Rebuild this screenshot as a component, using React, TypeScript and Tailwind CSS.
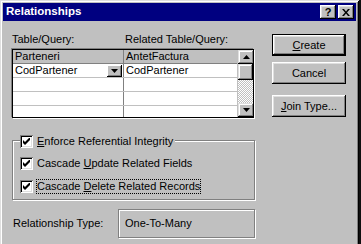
const font = { fontFamily: '"Liberation Sans", Arial, sans-serif' };

function TitleButton({ children }: { children: React.ReactNode }) {
  return (
    <div className="flex h-[14px] w-[16px] items-center justify-center bg-[#c0c0c0] text-[11px] font-bold leading-none text-black shadow-[inset_-1px_-1px_#000,inset_1px_1px_#fff,inset_-2px_-2px_#808080,inset_2px_2px_#dfdfdf]">
      {children}
    </div>
  );
}

function Check() {
  return (
    <div className="flex h-[13px] w-[13px] shrink-0 items-center justify-center bg-white shadow-[inset_1px_1px_#808080,inset_-1px_-1px_#fff,inset_2px_2px_#000,inset_-2px_-2px_#dfdfdf]">
      <svg width="7" height="7" viewBox="0 0 7 7">
        <path d="M0 2 L2 4 L6 0 L7 0 L7 2 L2 7 L0 5 Z" fill="#000" />
      </svg>
    </div>
  );
}

function Button({ children, isDefault }: { children: React.ReactNode; isDefault?: boolean }) {
  return (
    <div
      className={
        isDefault
          ? "flex h-[22px] w-[74px] items-center justify-center border border-black bg-[#c0c0c0] text-[11px] shadow-[inset_-1px_-1px_#000,inset_1px_1px_#fff,inset_-2px_-2px_#808080,inset_2px_2px_#dfdfdf]"
          : "flex h-[22px] w-[74px] items-center justify-center bg-[#c0c0c0] text-[11px] shadow-[inset_-1px_-1px_#000,inset_1px_1px_#fff,inset_-2px_-2px_#808080,inset_2px_2px_#dfdfdf]"
      }
    >
      {children}
    </div>
  );
}

function Arrow({ up }: { up?: boolean }) {
  return (
    <div className="flex h-[14px] w-[16px] items-center justify-center bg-[#c0c0c0] shadow-[inset_-1px_-1px_#000,inset_1px_1px_#dfdfdf,inset_-2px_-2px_#808080,inset_2px_2px_#fff]">
      <svg width="7" height="4" viewBox="0 0 7 4">
        <path d={up ? "M3.5 0 L7 4 L0 4 Z" : "M0 0 L7 0 L3.5 4 Z"} fill="#000" />
      </svg>
    </div>
  );
}

const rows = [
  ["CodPartener", "CodPartener"],
  ["", ""],
  ["", ""],
  ["", ""],
];

export default function App() {
  return (
    <div style={font} className="flex h-[244px] w-[361px] overflow-hidden bg-[#101010] text-[11px] text-black">
      <div className="flex h-[250px] w-[359px] flex-col bg-[#c0c0c0] pt-[3px] shadow-[inset_1px_1px_#dfdfdf,inset_-1px_-1px_#000,inset_2px_2px_#fff,inset_-2px_-2px_#808080]">
        {/* title bar */}
        <div className="mx-[3px] flex h-[18px] items-center bg-[#000080] pl-[3px] pr-[2px]">
          <span className="text-[11.5px] font-bold text-white">Relationships</span>
          <div className="ml-auto flex gap-[2px]">
            <TitleButton>?</TitleButton>
            <TitleButton>
              <svg width="8" height="7" viewBox="0 0 8 7">
                <path d="M0 0 L2 0 L4 2.5 L6 0 L8 0 L5 3.5 L8 7 L6 7 L4 4.5 L2 7 L0 7 L3 3.5 Z" fill="#000" />
              </svg>
            </TitleButton>
          </div>
        </div>

        <div className="flex pl-[12px]">
          {/* left column */}
          <div className="flex w-[244px] flex-col pt-[12px]">
            <div className="flex h-[13px] leading-[13px]">
              <span className="w-[113px]">Table/Query:</span>
              <span>Related Table/Query:</span>
            </div>

            {/* grid */}
            <div className="mt-[3px] flex h-[69px] w-[242px] border border-black bg-white shadow-[-1px_-1px_0_#808080,1px_1px_0_#fff]">
              <div className="flex flex-1 flex-col overflow-hidden">
                <div className="flex h-[14px] shrink-0 border-b border-[#808080] bg-[#c0c0c0] leading-[13px]">
                  <div className="w-[111px] border-r border-[#808080] pl-[2px]">Parteneri</div>
                  <div className="flex-1 pl-[2px]">AntetFactura</div>
                </div>
                {rows.map((r, i) => (
                  <div key={i} className="flex h-[14px] shrink-0 border-b border-[#c0c0c0] leading-[13px]">
                    <div className="flex w-[111px] items-center border-r border-[#808080] pl-[2px]">
                      <span className="flex-1">{r[0]}</span>
                      {i === 0 && (
                        <div className="mr-[1px] flex h-[12px] w-[15px] items-center justify-center bg-[#c0c0c0] shadow-[inset_-1px_-1px_#000,inset_1px_1px_#fff,inset_-2px_-2px_#808080]">
                          <svg width="7" height="4" viewBox="0 0 7 4">
                            <path d="M0 0 L7 0 L3.5 4 Z" fill="#000" />
                          </svg>
                        </div>
                      )}
                    </div>
                    <div className="flex-1 pl-[2px]">{r[1]}</div>
                  </div>
                ))}
              </div>
              {/* scrollbar */}
              <div className="flex w-[16px] flex-col border-l border-[#c0c0c0]">
                <Arrow up />
                <div className="h-[16px] bg-[#c0c0c0] shadow-[inset_-1px_-1px_#000,inset_1px_1px_#dfdfdf,inset_-2px_-2px_#808080,inset_2px_2px_#fff]" />
                <div className="flex-1 bg-[repeating-conic-gradient(#c0c0c0_0_25%,#fff_0_50%)] bg-[length:2px_2px]" />
                <Arrow />
              </div>
            </div>

            {/* group box */}
            <div className="mt-[22px] flex h-[60px] w-[243px] flex-col border border-[#808080] pl-[7px] shadow-[inset_1px_1px_#fff,1px_1px_0_#fff]">
              <div className="-mt-[6px] flex w-fit items-center gap-[4px] bg-[#c0c0c0] pr-[2px] leading-[13px]">
                <Check />
                <span>
                  <span className="underline">E</span>nforce Referential Integrity
                </span>
              </div>
              <div className="mt-[9px] flex items-center gap-[3px] leading-[13px]">
                <Check />
                <span className="pl-[1px]">
                  Cascade <span className="underline">U</span>pdate Related Fields
                </span>
              </div>
              <div className="mt-[9px] flex items-center gap-[3px] leading-[13px]">
                <Check />
                <span className="border border-dotted border-black px-[0px]">
                  Cascade <span className="underline">D</span>elete Related Records
                </span>
              </div>
            </div>

            {/* relationship type */}
            <div className="mt-[9px] flex h-[29px] items-center">
              <span className="w-[106px] pl-[1px]">Relationship Type:</span>
              <div className="flex h-[29px] w-[137px] items-center border border-[#808080] pl-[6px] shadow-[inset_1px_1px_#fff,1px_1px_0_#fff]">
                One-To-Many
              </div>
            </div>
          </div>

          {/* buttons */}
          <div className="ml-[16px] flex flex-col pt-[13px]">
            <Button isDefault>
              <span>
                <span className="underline">C</span>reate
              </span>
            </Button>
            <div className="mt-[6px]">
              <Button>Cancel</Button>
            </div>
            <div className="mt-[11px]">
              <Button>
                <span>
                  <span className="underline">J</span>oin Type...
                </span>
              </Button>
            </div>
          </div>
        </div>
      </div>
    </div>
  );
}
